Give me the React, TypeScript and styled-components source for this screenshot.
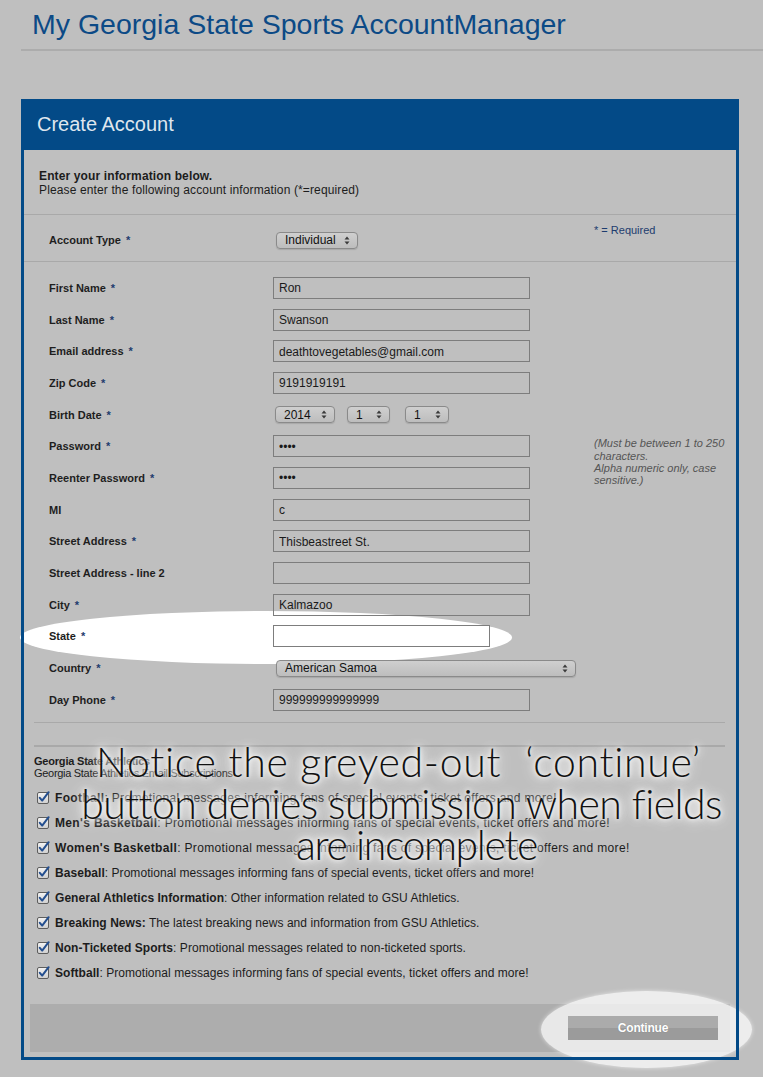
import { Fragment } from 'react';
import styled, { createGlobalStyle } from 'styled-components';

const GlobalStyle = createGlobalStyle`
  html, body {
    margin: 0;
    padding: 0;
    background: #bfbfbf;
  }
  body {
    font-family: "Liberation Sans", Arial, sans-serif;
    color: #1c1c1c;
  }
`;

const Page = styled.div`
  position: relative;
  width: 763px;
  min-height: 1077px;
  padding-left: 21px;
  box-sizing: border-box;
  overflow: hidden;
`;

const TitleBar = styled.div`
  padding: 7px 0 8px 11px;
  border-bottom: 2px solid #acacac;
`;

const Title = styled.h1`
  margin: 0;
  font-size: 28.5px;
  line-height: 34px;
  font-weight: normal;
  color: #0c4a86;
`;

const Panel = styled.div`
  position: relative;
  width: 718px;
  margin-top: 48px;
  padding: 0 3px 3px;
  box-sizing: border-box;

  &::after {
    content: '';
    position: absolute;
    inset: 0;
    border: 3px solid #034a87;
    pointer-events: none;
    z-index: 2;
  }
`;

const Header = styled.div`
  height: 51px;
  margin: 0 -3px;
  padding-left: 16px;
  background: #034a87;
  color: #dfe6ee;
  font-size: 20px;
  line-height: 51px;
`;

const Intro = styled.div`
  padding: 19px 15px 17px;
  font-size: 12px;
  line-height: 14px;
  letter-spacing: 0.13px;
`;

const Strong = styled.div`
  font-weight: bold;
`;

const Divider = styled.div<{ $inset?: boolean; $thick?: boolean }>`
  height: ${({ $thick }) => ($thick ? 2 : 1)}px;
  background: #a9a9a9;
  margin: ${({ $inset }) => ($inset ? '0 11px 0 10px' : '0')};
`;

const AccountSection = styled.div`
  display: grid;
  grid-template-columns: 225px 320px 1fr;
  grid-template-rows: 32px;
  align-items: start;
  height: 46px;
  padding: 9px 0 0 25px;
  box-sizing: border-box;
`;

const SelectCell = styled.div`
  height: 32px;
  display: flex;
  align-items: center;
`;

const FieldsGrid = styled.div`
  position: relative;
  z-index: 1;
  display: grid;
  grid-template-columns: 224px 321px 1fr;
  grid-auto-rows: 31.7px;
  align-items: center;
  padding: 10px 0 0 25px;
`;

const Label = styled.div`
  grid-column: 1;
  font-size: 11px;
  font-weight: bold;
  color: #1e1e1e;
  height: 32px;
  line-height: 32px;
  white-space: nowrap;
`;

const Control = styled.div`
  grid-column: 2;
  display: flex;
  align-items: center;
`;

const Star = styled.span`
  color: #1d3c6e;
  margin-left: 5px;
`;

const RequiredNote = styled.div`
  font-size: 11px;
  line-height: 13px;
  color: #1d3c6e;
`;

const Hint = styled.div`
  grid-column: 3;
  grid-row: 6 / span 2;
  align-self: start;
  margin-top: 7px;
  font-size: 11px;
  line-height: 12.3px;
  font-style: italic;
  color: #555;
`;

const TextInput = styled.input<{ $width?: number; $white?: boolean }>`
  width: ${({ $width }) => $width ?? 257}px;
  height: 22px;
  box-sizing: border-box;
  border: 1px solid #7d7d7d;
  background: ${({ $white }) => ($white ? '#fff' : 'transparent')};
  padding: 1px 5px 0;
  font-family: "Liberation Sans", Arial, sans-serif;
  font-size: 12px;
  color: #1a1a1a;
  outline: none;
  margin: 0;
`;

const SelectBox = styled.div<{ $width: number; $ml: number }>`
  display: flex;
  align-items: center;
  justify-content: space-between;
  width: ${({ $width }) => $width}px;
  height: 17px;
  box-sizing: border-box;
  margin-left: ${({ $ml }) => $ml}px;
  padding: 0 7px 0 8px;
  border: 1px solid #8a8a8a;
  border-radius: 4px;
  background: linear-gradient(#cfcfcf, #bdbdbd);
  box-shadow: 0 1px 1px rgba(0, 0, 0, 0.12);
  font-size: 12px;
  color: #111;
`;

const Subscriptions = styled.div`
  padding: 8px 0 0 10px;
`;

const SubTitle = styled.div`
  font-size: 11px;
  line-height: 12px;
  letter-spacing: -0.2px;
  font-weight: bold;
`;

const SubText = styled.div`
  font-size: 11px;
  line-height: 12px;
  letter-spacing: -0.3px;
  margin-bottom: 6.5px;
`;

const CheckRow = styled.div<{ $wide?: boolean }>`
  display: flex;
  align-items: center;
  gap: 5px;
  height: 25px;
  padding-left: 3px;
  font-size: 12px;
  letter-spacing: ${({ $wide }) => ($wide ? '0.34px' : '0.05px')};
  color: #1c1c1c;
  white-space: nowrap;

  b {
    font-weight: bold;
  }
`;

const Footer = styled.div`
  position: relative;
  display: flex;
  justify-content: flex-end;
  margin: 18.5px 6px 5px;
  padding: 12px;
  background: #adadad;
`;

const FooterHighlight = styled.div`
  position: absolute;
  left: 511px;
  top: -13px;
  width: 211px;
  height: 77px;
  border-radius: 50%;
  background: rgba(255, 255, 255, 0.72);
  box-shadow: 0 0 4px rgba(255, 255, 255, 0.6);
  z-index: 0;
`;

const ContinueButton = styled.button`
  position: relative;
  z-index: 1;
  width: 150px;
  height: 24px;
  border: none;
  padding: 0;
  background: linear-gradient(#ababab 50%, #9b9b9b 50%);
  color: #fff;
  font-family: "Liberation Sans", Arial, sans-serif;
  font-size: 12px;
  font-weight: bold;
  letter-spacing: -0.2px;
  text-shadow: 0 0 1px rgba(0, 0, 0, 0.25);
`;

const StateHighlight = styled.div`
  position: absolute;
  left: -1px;
  top: 512px;
  width: 492px;
  height: 53px;
  border-radius: 50%;
  background: #fff;
  z-index: 0;
`;

const Annotation = styled.div`
  position: absolute;
  left: 40px;
  right: 0;
  top: 741px;
  z-index: 5;
  text-align: center;
  font-family: Lato, "Open Sans", sans-serif;
  font-weight: 300;
  font-size: 41px;
  line-height: 41.5px;
  color: #111;
  white-space: nowrap;
  text-shadow: 0 0 4px #fff, 0 0 8px #fff, 0 0 14px #fff, 0 0 20px rgba(255, 255, 255, 0.8);
  pointer-events: none;
`;

const AnnotationLine = styled.div<{ $spacing: number; $shift?: number }>`
  letter-spacing: ${({ $spacing }) => $spacing}px;
  padding-left: ${({ $shift }) => ($shift ?? 0) * 2}px;
  padding-right: ${({ $shift }) => ($shift ?? 0) < 0 ? -($shift ?? 0) * 2 : 0}px;
`;

const QuoteGap = styled.span`
  display: inline-block;
  width: 24px;
`;

const UpDown = () => (
  <svg width="6" height="9" viewBox="0 0 6 9">
    <path d="M0.5 3.5 L3 0.5 L5.5 3.5 Z" fill="#3a3a3a" />
    <path d="M0.5 5.5 L3 8.5 L5.5 5.5 Z" fill="#3a3a3a" />
  </svg>
);

const Select = ({ value, width, ml = 2 }: { value: string; width: number; ml?: number }) => (
  <SelectBox $width={width} $ml={ml}>
    <span>{value}</span>
    <UpDown />
  </SelectBox>
);

const CheckIcon = () => (
  <svg width="13" height="13" viewBox="0 0 13 13">
    <defs>
      <linearGradient id="cb" x1="0" y1="0" x2="0" y2="1">
        <stop offset="0" stopColor="#f4f4f4" />
        <stop offset="1" stopColor="#cfcfcf" />
      </linearGradient>
    </defs>
    <rect x="0.5" y="1.5" width="11" height="11" rx="1.5" fill="url(#cb)" stroke="#5d5d5d" />
    <path d="M2.8 6.8 L5.2 9.6 L11.6 1.2" fill="none" stroke="#244f8f" strokeWidth="2" strokeLinecap="round" strokeLinejoin="round" />
  </svg>
);

type Field = {
  label: string;
  required: boolean;
  kind: 'text' | 'password' | 'date' | 'select';
  value?: string;
  width?: number;
  white?: boolean;
};

const fields: Field[] = [
  { label: 'First Name', required: true, kind: 'text', value: 'Ron' },
  { label: 'Last Name', required: true, kind: 'text', value: 'Swanson' },
  { label: 'Email address', required: true, kind: 'text', value: 'deathtovegetables@gmail.com' },
  { label: 'Zip Code', required: true, kind: 'text', value: '9191919191' },
  { label: 'Birth Date', required: true, kind: 'date' },
  { label: 'Password', required: true, kind: 'password', value: 'ronn' },
  { label: 'Reenter Password', required: true, kind: 'password', value: 'ronn' },
  { label: 'MI', required: false, kind: 'text', value: 'c' },
  { label: 'Street Address', required: true, kind: 'text', value: 'Thisbeastreet St.' },
  { label: 'Street Address - line 2', required: false, kind: 'text', value: '' },
  { label: 'City', required: true, kind: 'text', value: 'Kalmazoo' },
  { label: 'State', required: true, kind: 'text', value: '', width: 217, white: true },
  { label: 'Country', required: true, kind: 'select', value: 'American Samoa', width: 300 },
  { label: 'Day Phone', required: true, kind: 'text', value: '999999999999999' },
];

const promo = ': Promotional messages informing fans of special events, ticket offers and more!';

const subscriptions = [
  { name: 'Football', text: promo, wide: true },
  { name: "Men's Basketball", text: promo, wide: true },
  { name: "Women's Basketball", text: promo, wide: true },
  { name: 'Baseball', text: promo },
  { name: 'General Athletics Information', text: ': Other information related to GSU Athletics.' },
  { name: 'Breaking News:', text: ' The latest breaking news and information from GSU Athletics.' },
  { name: 'Non-Ticketed Sports', text: ': Promotional messages related to non-ticketed sports.' },
  { name: 'Softball', text: promo },
];

const renderControl = (f: Field) => {
  if (f.kind === 'date') {
    return (
      <>
        <Select value="2014" width={60} />
        <Select value="1" width={43} ml={12} />
        <Select value="1" width={44} ml={15} />
      </>
    );
  }
  if (f.kind === 'select') {
    return <Select value={f.value ?? ''} width={f.width ?? 100} ml={3} />;
  }
  return (
    <TextInput
      type={f.kind === 'password' ? 'password' : 'text'}
      readOnly
      defaultValue={f.value}
      $width={f.width}
      $white={f.white}
    />
  );
};

export default function App() {
  return (
    <>
      <GlobalStyle />
      <Page>
        <TitleBar>
          <Title>My Georgia State Sports AccountManager</Title>
        </TitleBar>

        <Panel>
          <Header>Create Account</Header>

          <Intro>
            <Strong>Enter your information below.</Strong>
            <div>Please enter the following account information (*=required)</div>
          </Intro>
          <Divider />

          <AccountSection>
            <Label>
              Account Type<Star>*</Star>
            </Label>
            <SelectCell>
              <Select value="Individual" width={82} ml={2} />
            </SelectCell>
            <RequiredNote>* = Required</RequiredNote>
          </AccountSection>
          <Divider />

          <StateHighlight />
          <FieldsGrid>
            {fields.map((f) => (
              <Fragment key={f.label}>
                <Label>
                  {f.label}
                  {f.required && <Star>*</Star>}
                </Label>
                <Control>{renderControl(f)}</Control>
              </Fragment>
            ))}
            <Hint>
              (Must be between 1 to 250
              <br />
              characters.
              <br />
              Alpha numeric only, case
              <br />
              sensitive.)
            </Hint>
          </FieldsGrid>

          <div style={{ height: 6 }} />
          <Divider $inset />
          <div style={{ height: 22 }} />
          <Divider $inset $thick />

          <Subscriptions>
            <SubTitle>Georgia State Athletics</SubTitle>
            <SubText>Georgia State Athletics Email Subscriptions</SubText>
            {subscriptions.map((s) => (
              <CheckRow key={s.name} $wide={s.wide}>
                <CheckIcon />
                <span>
                  <b>{s.name}</b>
                  {s.text}
                </span>
              </CheckRow>
            ))}
          </Subscriptions>

          <Footer>
            <FooterHighlight />
            <ContinueButton type="button">Continue</ContinueButton>
          </Footer>
        </Panel>

        <Annotation>
          <AnnotationLine $spacing={0.7} $shift={-3}>
            Notice the greyed-out<QuoteGap />‘continue’
          </AnnotationLine>
          <AnnotationLine $spacing={-0.6}>button denies submission when fields</AnnotationLine>
          <AnnotationLine $spacing={-1.4} $shift={15}>
            are incomplete
          </AnnotationLine>
        </Annotation>
      </Page>
    </>
  );
}
